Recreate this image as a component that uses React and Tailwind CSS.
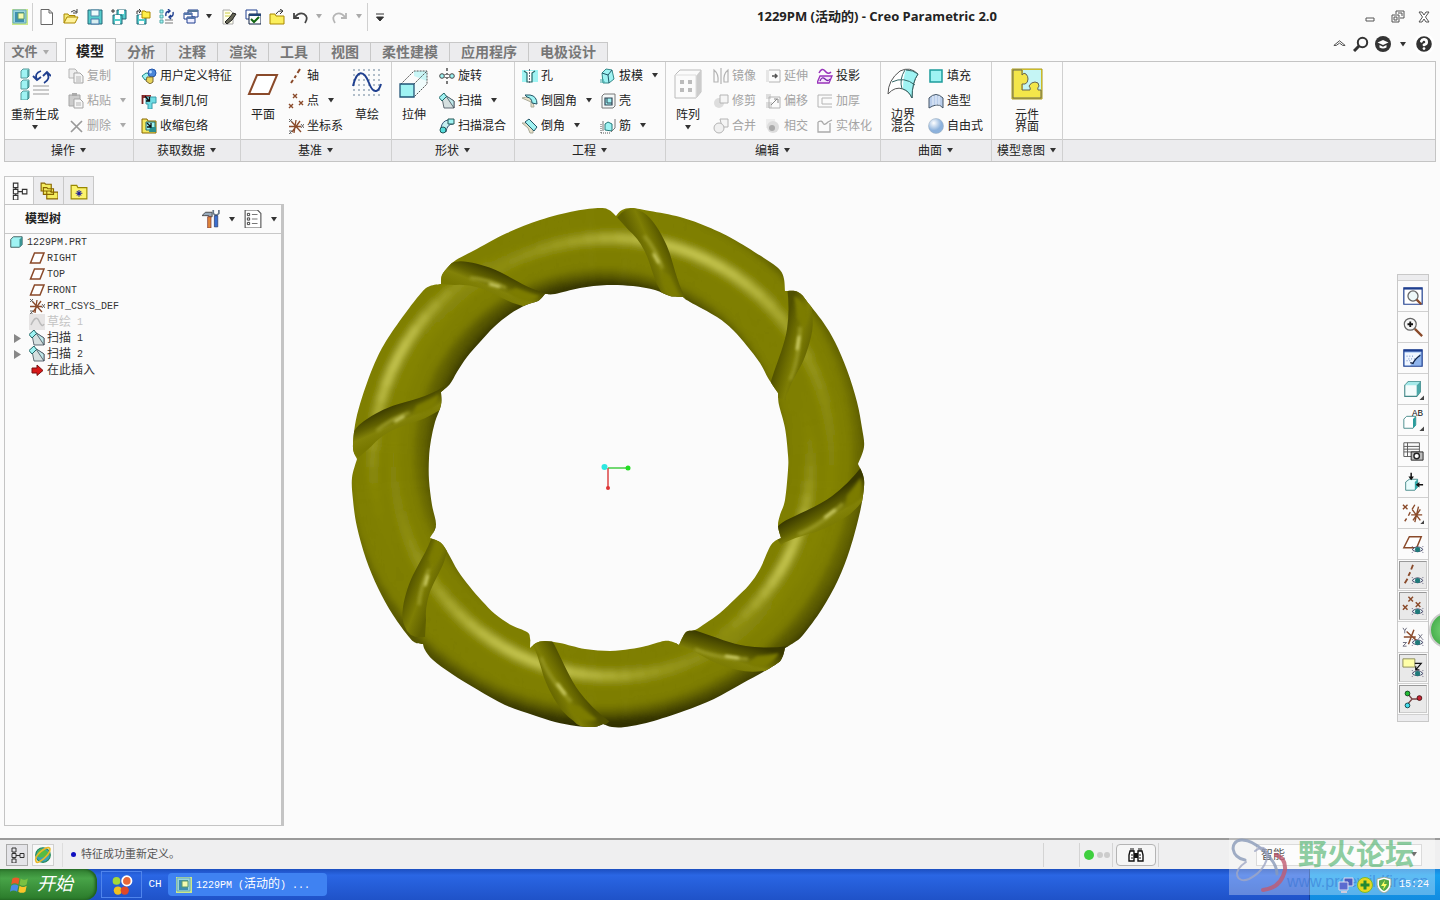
import { HelpCircle } from 'lucide-react';

const C = '#9ff3f3';
const D = '#3f4a55';
const B = '#8a4a2a';
const G = '#b4b4b4';
const N = '#1f3f8f';

const eye = (
  <g>
    <path d="M11 18q6-6 12 0q-6 5-12 0z" fill="#e8f4f4" stroke="#446" strokeWidth="1" />
    <circle cx="17" cy="18" r="2.8" fill="#1f7a7a" />
    <path d="M12 15.500l-1-1M22 15.500l1-1M12 20.500l-1 1M22 20.500l1 1" stroke="#446" />
  </g>
);

// 16x16 glyphs unless a size is listed in SIZES
const SIZES = { regenBig: 32, plane: 32, sketch: 32, extrude: 32, pattern: 32, boundary: 32, component: 32, refit: 24, zoomIn: 24, repaint: 24, display: 24, saved: 24, camera: 24, viewMgr: 24, datum: 24, vPlane: 24, vAxis: 24, vPoint: 24, vCsys: 24, vNote: 24, vSpin: 24 };

const GLYPHS = {
  app: <><path d="M0 0h16v16H0z" fill="#cbe88a" /><path d="M1 1h13v13H1z" fill="#9ad4dc" stroke="#6ab" /><path d="M3 3h9v10H3z" fill="#3f8fb0" /><path d="M6 4h6v6H6z" fill="#f4fbb0" stroke="#5a9a70" /></>,
  file: <path d="M2 .5h8l3.500 3.500v11.500H2zM10 .5v3.500h3.500" fill="#fff" stroke="#666" />,
  open: <><path d="M1 14V5h4l1 1.500h6V9" fill="#f5ea7a" stroke="#a80" /><path d="M1 14l3-6h11l-3 6z" fill="#fff29a" stroke="#a80" /><path d="M8 3q3-3 6 0M14 0v4h-4" fill="none" stroke="#444" /></>,
  save: <><path d="M1 1h14v14H1z" fill="#5cc" stroke="#267" /><path d="M4 1h8v6H4z" fill="#eefcfc" stroke="#58a" /><path d="M4 10h8v5H4z" fill="#d8eef0" stroke="#47a" /></>,
  saveAs: <><path d="M6 1h9v9H6z" fill="#5cc" stroke="#267" /><path d="M8 1h5v4H8z" fill="#fff" /><path d="M2 6h9v9H2z" fill="#5cc" stroke="#267" /><path d="M4 6h5v4H4zM4 12h5v3H4z" fill="#fff" /><path d="M0 2h4M2 0v4" stroke="#333" /></>,
  backup: <><path d="M2 6h9v9H2z" fill="#5cc" stroke="#267" /><path d="M4 6h5v4H4zM4 12h5v3H4z" fill="#fff" /><path d="M7 2h3l1 1h4v6H7z" fill="#fff04a" stroke="#a80" /><path d="M2 5V2h4M4 0l2 2-2 2" fill="none" stroke="#333" /></>,
  regen: <><path d="M1 1h3v3H1zM1 6h3v3H1zM1 11h3v3H1z" fill={C} stroke="#5aa" /><path d="M6 11h8M6 14h8" stroke="#777" /><path d="M7 7q-1-5 4-5M9 0l2 2-2 2M14 3q1 5-4 5M12 10l-2-2 2-2" fill="none" stroke={N} strokeWidth="1.4" /></>,
  windows: <><path d="M5 1h10v7H5z" fill="#fff" stroke={N} /><path d="M5 1h10v2H5z" fill="#579" /><path d="M1 4h8v6H1z" fill="#fff" stroke={N} /><path d="M1 4h8v2H1z" fill="#57a" /><path d="M4 8h8v6H4z" fill="#eef" stroke={N} /><path d="M4 8h8v2H4z" fill="#57a" /></>,
  erase: <><path d="M2 1h7l3 3v11H2z" fill="#ffe" stroke="#aaa" /><path d="M4 4h5M4 7h5" stroke="#cc4" /><path d="M15 5l-4 6-5 4-2-2 5-5 3-4z" fill="#665" stroke="#222" /></>,
  checkWin: <><path d="M1 1h11v9H1z" fill="#fff" stroke={N} /><path d="M4 5h12v10H4z" fill="#fff" stroke="#124" /><path d="M4 5h12v2H4z" fill="#247" /><path d="M6 10l3 3 5-5" fill="none" stroke="#161" strokeWidth="2" /></>,
  closeFolder: <><path d="M1 5h5l1 2h8v8H1z" fill="#fbef5c" stroke="#a80" /><path d="M7 5q2-4 6-3M11 0l3 2-3 3" fill="none" stroke="#333" /></>,
  undo: <path d="M1 4v5h5M2 8q4-5 9-3q5 3 1 9" fill="none" stroke="#444" strokeWidth="1.800" />,
  redo: <path d="M15 4v5h-5M14 8q-4-5-9-3q-5 3-1 9" fill="none" stroke="#b5b5b5" strokeWidth="1.800" />,
  more: <path d="M4 5h8M4.500 8h7L8 12z" fill="#333" stroke="#333" />,
  copy: <><path d="M1 1h6l2 2v7H1z" fill="#eee" stroke={G} /><path d="M6 5h6l3 3v7H6z" fill="#f4f4f4" stroke="#a5a5a5" /><path d="M8 9h5M8 11h5M8 13h5" stroke={G} /></>,
  paste: <><path d="M1 2h11v11H1z" fill="#ccc" stroke="#a5a5a5" /><path d="M4 0h5v3H4z" fill="#aaa" /><path d="M6 6h6l3 3v6H6z" fill="#f6f6f6" stroke="#a5a5a5" /><path d="M8 10h5M8 12h5" stroke={G} /></>,
  del: <path d="M3 3l11 11M14 3L3 14" stroke="#999" strokeWidth="1.700" />,
  udf: <><path d="M1 8l4-3 5 1-1 4-5 2z" fill={C} stroke="#288" /><circle cx="11" cy="5" r="4" fill="#4a86d8" stroke="#25a" /><path d="M6 9h6v5l-3 2-4-3z" fill="#e8d45a" stroke="#763" /><circle cx="9.500" cy="4" r="1.400" fill="#bdf" /></>,
  copyGeo: <><path d="M1 2h9v3H1z" fill="#933" /><path d="M1.500 2v9" stroke="#722" strokeWidth="1.800" /><path d="M5 4h10v6h-4v6H7v-5H5z" fill="#6fdce4" stroke="#3a9aa8" /><path d="M4 3l4 5M8.500 4v4H5" stroke="#111" strokeWidth="1.300" fill="none" /></>,
  shrink: <><path d="M1 1h5l1 2h8v12H1z" fill="#f3e860" stroke="#860" /><path d="M5 4h9v8H5z" fill={C} stroke="#266" /><path d="M9 9h6v5H8z" fill="#2a8f8f" /><path d="M6 5l4 4M10 5v4H6" stroke="#111" strokeWidth="1.300" fill="none" /></>,
  axis: <path d="M12 1L9.500 5M8 7.500L6.500 10M5 12l-2 3" stroke={B} strokeWidth="2" />,
  point: <path d="M5 1l4 4M9 1L5 5M11 8l4 4M15 8l-4 4M1 11l4 4M5 11l-4 4" stroke={B} strokeWidth="1.400" />,
  csys: <><path d="M1 8.500h12M8 2L6 15M3 3l10 11M12 3L4 14" stroke={B} strokeWidth="1.300" /><path d="M1 1l3 3M4 1L1 4M13 6l3 4M16 6l-3 4M1 13h3l-3 3h3" stroke="#666" fill="none" /></>,
  revolve: <><path d="M8 0v3M8 5v2M8 9v2M8 13v3" stroke="#333" strokeWidth="1.300" /><circle cx="3" cy="8" r="2.300" fill={C} stroke="#444" /><circle cx="13" cy="8" r="2.300" fill={C} stroke="#444" /><path d="M5 7q3-2 6 0M5 9q3 2 6 0" fill="none" stroke="#777" /></>,
  sweep: <><path d="M3 5l2 10h10V8L7 3z" fill="#d5dfdf" stroke={D} strokeWidth=".8" /><path d="M7 3l8 12V8L9 4z" fill="#bfe8ea" stroke={D} strokeWidth=".8" /><path d="M0 4.500L5 0l2.500 3.500L3 8z" fill={C} stroke="#266" /></>,
  blend: <><path d="M2 10q1-7 7-8l5 4q-6 0-7 8z" fill="#c5eef0" stroke="#357" /><path d="M9 1h6v5H9z" fill={C} stroke="#255" /><circle cx="4" cy="12" r="3" fill="#5dd" stroke="#255" /></>,
  hole: <><path d="M0 2h16v12H0z" fill={C} /><path d="M2 3l3 2v9h5V5l3-2" fill="#fff" stroke="#266" strokeWidth="1.200" /><path d="M7.500 1v14" stroke="#667" strokeDasharray="2 1" /></>,
  round: <><path d="M0 5q7-2 9 1q3 3 3 8H9V9z" fill="#e6e0c8" stroke="#aa9" /><path d="M3 2h5q7 1 7 9l-5-1q0-5-5-6z" fill={C} stroke="#256" /></>,
  chamfer: <><path d="M0 5h6l5 5v5H8l-2-5z" fill="#e6e0c8" stroke="#aa9" /><path d="M3 4l4-3 8 8-3 4z" fill={C} stroke="#256" /></>,
  draft: <><path d="M2 5l4-4 6 1 2 9-5 4H3z" fill={C} stroke="#388" /><path d="M2 5l6 2 1 8M8 7l4-5" fill="none" stroke="#256" /><path d="M0 12h4M0 14h5" stroke="#4aa" /></>,
  shell: <><path d="M2 3l2-2h11v12l-2 2H2z" fill="#f4f8f8" stroke="#777" /><path d="M5 5h7v7H5z" fill={C} stroke="#345" strokeWidth="1.200" /><path d="M7 5v5h5" fill="none" stroke="#345" /></>,
  rib: <><path d="M1 15V6M1 15h9" stroke="#555" strokeDasharray="1 1" /><path d="M5 12V6l3-2 4 2v7z" fill={C} stroke="#277" /><path d="M3 3v10M15 1v9l-4 4" fill="none" stroke="#777" /></>,
  mirror: <path d="M1 2q5 4 4 12H1zM15 2q-5 4-4 12h4zM8 0v16" fill="none" stroke={G} strokeWidth="1.200" />,
  trim: <><circle cx="6" cy="10" r="5" fill="#ddd" /><path d="M7 2h8v8H7z" fill="#f5f5f5" stroke={G} /></>,
  merge: <><path d="M7 1h8v8H9z" fill="#f5f5f5" stroke={G} /><circle cx="6" cy="10" r="5" fill="#f0f0f0" stroke={G} /></>,
  extend: <><path d="M1 2h3v12H1z" fill="#e6e6e6" /><path d="M4 2h11v12H4" fill="none" stroke={G} /><path d="M7 8h4M10 6l2 2-2 2" fill="none" stroke="#555" strokeWidth="1.500" /></>,
  offset: <><path d="M1 1h5v5H1zM1 9h6v6H1z" fill="#ddd" /><path d="M4 4h11v11H4z" fill="none" stroke={G} /><path d="M6 12l6-6M9 6h4v4" fill="none" stroke="#888" /></>,
  intersect: <><path d="M1 1h9v9H1z" fill="#eee" /><circle cx="8" cy="9" r="6" fill="#ddd" /><circle cx="7" cy="10" r="3" fill="#aaa" /></>,
  project: <><path d="M2 5q3-6 6-2t6 1" fill="none" stroke="#93b" strokeWidth="1.500" /><path d="M3 8h12l-3 7H0z" fill="#f6e6fb" stroke="#93b" strokeWidth="1.300" /><path d="M3 13q2-5 5-2t5 0" fill="none" stroke="#72a" strokeWidth="1.300" /></>,
  thicken: <path d="M15 2H1v12h14M15 5H5v6h10" fill="none" stroke={G} strokeWidth="1" />,
  solidify: <path d="M1 4v10h12V5M1 4q4-2 5 1t5-1l4-2" fill="none" stroke="#aaa" strokeWidth="1.300" />,
  fill: <path d="M2 2h12v12H2z" fill={C} stroke="#1c9c9c" strokeWidth="1.500" />,
  style: <><path d="M1 5q7-7 14 0v10q-3-4-7-3t-7 3z" fill="#b9cdea" stroke="#456" /><path d="M5 3v9M8 2v10M11 3v9" stroke="#e8f0fa" /></>,
  free: <><defs><radialGradient id="ball" cx=".35" cy=".3"><stop offset="0" stopColor="#fff" /><stop offset="1" stopColor="#8db2dc" /></radialGradient></defs><circle cx="8" cy="8" r="7.500" fill="url(#ball)" stroke="#9ab" strokeWidth=".5" /></>,
  regenBig: <><path d="M2 3l2-2h6v7l-2 2H2zM2 14l2-2h6v7l-2 2H2zM2 25l2-2h6v7l-2 2H2z" fill={C} stroke="#599" /><path d="M9 2v7M9 13v7M9 24v7" stroke="#277" /><path d="M14 18h16M14 22h16M14 26h16" stroke="#999" /><path d="M18 12q-3-7 4-9M14 8l4 4 4-3M28 5q4 6-3 10M24 8l4-4 4 4" fill="none" stroke={N} strokeWidth="1.800" /></>,
  plane: <path d="M10 7h20l-8 19H2z" fill="#fff" stroke={B} strokeWidth="2" />,
  sketch: <><path d="M2 2h28M2 7h28M2 12h28M2 17h28M2 22h28M2 27h28" stroke="#9ab" strokeDasharray="2 3" strokeWidth="1.500" /><path d="M2 18C6 1 13 2 18 15S28 23 30 16" fill="none" stroke={N} strokeWidth="2" /></>,
  extrude: <><path d="M16 16L29 3v13L16 29z" fill="#f0fbfb" /><path d="M16 3h13v10L16 8z" fill="#c9f6f6" /><path d="M3 16L16 3h13v13L16 29M16 16L29 3" fill="none" stroke="#555" strokeDasharray="2 1" /><path d="M2 16h14v13H2z" fill={C} stroke="#257" strokeWidth="1.300" /></>,
  pattern: <><path d="M3 7l5-5h21v22l-5 6H3z" fill="#fbfbfb" stroke="#bbb" /><path d="M24 8l5-6v22l-5 6z" fill="#ccc" /><path d="M3 7h21v23" fill="none" stroke="#ddd" /><path d="M8 12h4v4H8zM16 12h4v4h-4zM8 20h4v4H8zM16 20h4v4h-4z" fill="#bbb" /></>,
  boundary: <><path d="M1 26q0-14 12-23q10-5 18 3q-6 8-6 24q-3-7-9-9q-8-3-15 5z" fill="#fff" stroke="#555" /><path d="M19 2q7 0 12 4q-6 8-6 24q-3-7-9-9 0-12 3-19z" fill={C} /><path d="M18 2q-6 9-3 19M5 14q12-6 23 3M19 2q7 0 12 4q-6 8-6 24q-3-7-9-9" fill="none" stroke="#366" /></>,
  component: <><path d="M1 1h30v30H1z" fill="#f0dc30" stroke="#a89a20" /><path d="M12 2h18v20H12z" fill="#c5f5f5" /><path d="M2 2h9v5q2-3 4-1t2 5q0 4-3 5h-3v6h8q1-2-1-4q2-4 6-4t4 4q-2 2-1 4h3v8H2z" fill="#f3e64a" stroke="#665" /></>,
  tree: <path d="M3 1h4v4H3zM3 6.500h4v4H3zM3 12h4v4H3zM11 6.500h4v4h-4zM5 5v1.500M5 10.500V12M7 8.500h4" fill="none" stroke="#333" />,
  folders: <path d="M1 1h3l1 1h5v6H1zM3 5h3l1 1h5v5H3zM6 8h3l1 1h6v6H6z" fill="#f4ec5e" stroke="#860" />,
  favs: <><path d="M1 3h5l1 2h8v10H1z" fill="#fbf36c" stroke="#980" /><path d="M8 7v6M5 10h6M6 8l4 4M10 8l-4 4" stroke="#229" strokeWidth=".9" /></>,
  tools: <><path d="M0 5l3-3h6v4H6V5H2z" fill="#9ab" stroke="#444" strokeWidth=".8" /><path d="M5 6h3v10H5z" fill="#e0853a" stroke="#733" strokeWidth=".6" /><path d="M10 0v3l2.500 2L15 3V0" fill="none" stroke="#678" strokeWidth="1.500" /><path d="M11 5h3v10h-3z" fill="#3a6fd0" stroke="#236" strokeWidth=".6" /></>,
  list: <><path d="M1 0h11l3 3v13H1z" fill="#fff" stroke="#555" /><path d="M3 3h2v2H3zM3 7h2v2H3zM3 11h2v2H3z" fill="none" stroke="#333" strokeWidth=".8" /><path d="M7 4h5M7 8h5M7 12h5" stroke="#777" /></>,
  part: <><path d="M2 5l3-3h10v9l-3 3H2z" fill={C} stroke="#355" /><path d="M12 5l3-3v9l-3 3z" fill="#3a9494" /></>,
  smallPlane: <path d="M5.500 3H15l-4 10H1.500z" fill="#fff" stroke={B} strokeWidth="1.500" />,
  greySketch: <><path d="M0 0h16v16H0z" fill="#e6e4e4" /><path d="M2 11q5-11 8-4t5 3" fill="none" stroke="#bbb" strokeWidth="1.500" /></>,
  insert: <path d="M3 6h5V3l6 5.500-6 5V11H3z" fill="#d81818" stroke="#711" />,
  globe: <><circle cx="8" cy="8" r="6.500" fill="#3aa0b8" stroke="#285" /><path d="M4 4q4-3 8 1t-4 5-4-6z" fill="#5b4" /><path d="M2 14Q0 10 6 5T14 2Q15 6 9 11T2 14z" fill="none" stroke="#e8b828" strokeWidth="1.500" /></>,
  refit: <><path d="M2 3h20v18H2z" fill="#fff" stroke={N} strokeWidth="1.300" /><path d="M2 3h20v2H2z" fill={N} /><circle cx="12" cy="12" r="5.500" fill="#eef8f8" stroke="#666" strokeWidth="1.400" /><path d="M16 16l5 5" stroke={B} strokeWidth="2.500" /></>,
  zoomIn: <><circle cx="9" cy="9" r="6.500" fill="#f6f6f6" stroke="#666" strokeWidth="1.300" /><path d="M6 9h6M9 6v6" stroke="#111" strokeWidth="2" /><path d="M14 14l8 8" stroke={B} strokeWidth="2.500" /></>,
  repaint: <><path d="M2 3h20v18H2z" fill="#8fb4ec" stroke={N} strokeWidth="1.300" /><path d="M2 3h20v2H2z" fill={N} /><path d="M3 6h18L9 20H3z" fill="#f0f6ff" /><path d="M5 10h9M7 13h7M5 15h5" stroke="#57b" strokeDasharray="1 2" /><path d="M20 9q-6 4-8 9l-3-1" fill="none" stroke="#124" strokeWidth="1.500" /></>,
  display: <><path d="M3 8l4-4h13v11l-4 5H3z" fill="#f4fcfc" stroke="#488" strokeWidth="1.200" /><path d="M3 8l4-4h13l-4 4z" fill="#a5eaea" /><path d="M16 8l4-4v11l-4 5z" fill="#4aa8a8" /><path d="M24 19v5h-5z" fill="#444" /></>,
  saved: <><path d="M2 11l3-3h10v9l-3 4H2z" fill="#fff" stroke="#488" /><path d="M12 11l3-3v10l-3 3z" fill="#2a9c9c" /><text x="11" y="8" fontSize="10" fontFamily="Liberation Mono" fill="#111">AB</text><path d="M24 19v5h-5z" fill="#444" /></>,
  camera: <><path d="M2 3h17v15H2zM2 7h17M2 10h17M2 13h17M6 3v15" fill="none" stroke="#555" /><path d="M10 13h13v9H10z" fill="#bbb" stroke="#222" /><circle cx="16" cy="17.500" r="3" fill="#fff" stroke="#222" strokeWidth="1.500" /></>,
  viewMgr: <><path d="M4 12l4-3h9v8l-3 4H4z" fill="#e8fcfc" stroke="#488" /><path d="M14 12l3-3v9l-3 3z" fill="#3aa" /><path d="M10 2v5M23 15h-5" stroke="#111" strokeWidth="1.600" /><path d="M7 6h6l-3 4zM19 12v6l-4-3z" fill="#111" /></>,
  datum: <><path d="M1 3l5 5M6 3L1 8M14 3l-3 5M9 11l-2 4M5 18l-2 3M10 14h12M18 5l-4 17M11 8l9 12M20 8l-8 12" stroke={B} strokeWidth="1.500" /><path d="M24 20v4h-4z" fill="#444" /></>,
  vPlane: <><path d="M8 4h13l-5 12H2z" fill="#fff" stroke={B} strokeWidth="1.600" />{eye}</>,
  vAxis: <><path d="M12 1l-2 5M9 9l-2 4M6 16l-3 5" stroke={B} strokeWidth="2" />{eye}</>,
  vPoint: <><path d="M7 2l5 5M12 2L7 7M1 11l5 5M6 11l-5 5M15 8l5 5M20 8l-5 5" stroke={B} strokeWidth="1.600" />{eye}</>,
  vCsys: <><path d="M2 12h13M13 4L7 20M5 6l11 10" stroke={B} strokeWidth="1.600" /><path d="M1 2l2 3 2-3M3 5v3M18 9l4 5M22 9l-4 5M1 18h4l-4 4h4" fill="none" stroke="#667" />{eye}</>,
  vNote: <><path d="M1 2h13v9H1z" fill="#ffffa8" stroke="#885" /><path d="M14 7h7l-6 7M15 10v4h4" fill="none" stroke="#111" strokeWidth="1.300" />{eye}</>,
  vSpin: <><path d="M6 6l5 6h9M11 12l-6 7" stroke="#744" fill="none" strokeWidth="1.400" /><circle cx="6" cy="6" r="2.600" fill="#2b3" stroke="#142" /><circle cx="19" cy="11" r="2.600" fill="#c23" stroke="#411" /><circle cx="6" cy="19" r="2.600" fill="#4de" stroke="#144" /></>,
  binoc: <><path d="M2 4h4v10H1V8zM10 4h4l1 4v6h-5z" fill="#fff" stroke="#111" strokeWidth="1.400" /><path d="M6 6h4v5H6z" fill="#111" /><path d="M3 1v3M5 1v3M11 1v3M13 1v3" stroke="#111" /><path d="M4 7v6M12 7v6" stroke="#111" strokeDasharray="2 1" /></>,
  cap: <><circle cx="8" cy="8" r="8" fill="#333" /><path d="M2.500 6.500L8 4l5.500 2.500L8 9zM4.500 9v2.500q3.500 2 7 0V9L8 10.800z" fill="#fff" /></>,
  search: <><circle cx="9.500" cy="6.500" r="4.700" fill="none" stroke="#333" strokeWidth="2" /><path d="M6 10l-5 5" stroke="#333" strokeWidth="3" /></>,
  up: <path d="M2 9l6-5 6 5h-2.500L8 6.500 4.500 9z" fill="#fff" stroke="#444" strokeWidth="1" />,
  min: <path d="M4 9h8v3H4z" fill="#fff" stroke="#555" />,
  restore: <path d="M7 2h8v7h-4M7 2v3M3 6h7v7H3zM5 8h3v3H5zM9 4h4v3" fill="none" stroke="#555" />,
  close: <path d="M3 3h3l2 3 2-3h3l-3.500 5L13 13h-3l-2-3-2 3H3l3.500-5z" fill="#fff" stroke="#555" />,
  flag: <><path d="M2 3q3-2 6 0L7 8Q4 6 1 8z" fill="#ea5a2a" /><path d="M9 3q3 2 6 0l-1 5q-3 2-6 0z" fill="#7ac142" /><path d="M1 9q3-2 6 0l-1 5Q3 12 0 14z" fill="#4a8ae8" /><path d="M8 9q3 2 6 0l-1 5q-3 2-6 0z" fill="#fbc52a" /></>,
  media: <><circle cx="4" cy="5" r="2.800" fill="#a4d838" /><circle cx="5" cy="12" r="3" fill="#f0c020" /><circle cx="10" cy="12" r="3" fill="#e04828" /><circle cx="11.500" cy="5" r="3.400" fill="#e86838" stroke="#fff" strokeWidth="1.300" /></>,
  net: <><path d="M6 1h9v8H6z" fill="#4a5ac0" stroke="#dde" /><path d="M1 5h9v8H1z" fill="#5b6bd0" stroke="#dde" /><path d="M3 15h6" stroke="#ccd" strokeWidth="2" /></>,
  plus: <><circle cx="8" cy="8" r="7.500" fill="#e8d820" stroke="#7b3" /><path d="M8 3.500v9M3.500 8h9" stroke="#283" strokeWidth="3" /></>,
  shield: <><path d="M8 0l7 2v6q-1 6-7 8q-6-2-7-8V2z" fill="#fff" stroke="#9a9" /><path d="M8 2l5 1.500V8q-1 4-5 6q-4-2-5-6V3.500z" fill="#5a4" /><path d="M9 3L5 9h3l-1 4 4-6H8z" fill="#ff6" /></>,
};

function Icon({ name, size }) {
  const box = SIZES[name] || 16;
  const px = size || box;
  return (
    <svg width={px} height={px} viewBox={`0 0 ${box} ${box}`} className="shrink-0" aria-hidden="true">
      {GLYPHS[name]}
    </svg>
  );
}

function Caret({ dim }) {
  return (
    <svg width="8" height="5" viewBox="0 0 8 5" className="shrink-0" aria-hidden="true">
      <path d="M1 0h6L4 4.500z" fill={dim ? '#aaa' : '#333'} />
    </svg>
  );
}

const TABS = ['分析', '注释', '渲染', '工具', '视图', '柔性建模', '应用程序', '电极设计'];

// item: [icon, label, has menu, disabled]
const GROUPS = [
  { title: '操作', w: 'w-[129px]', cols: [
    { big: 'regenBig', label: ['重新生成'], menu: true, w: 'w-[60px]' },
    { items: [['copy', '复制', 0, 1], ['paste', '粘贴', 1, 1], ['del', '删除', 1, 1]] },
  ] },
  { title: '获取数据', w: 'w-[107px]', pad: 'pl-1', cols: [
    { items: [['udf', '用户定义特征'], ['copyGeo', '复制几何'], ['shrink', '收缩包络']] },
  ] },
  { title: '基准', w: 'w-[151px]', cols: [
    { big: 'plane', label: ['平面'], w: 'w-[44px]' },
    { items: [['axis', '轴'], ['point', '点', 1], ['csys', '坐标系']] },
    { big: 'sketch', label: ['草绘'], w: 'w-[48px]' },
  ] },
  { title: '形状', w: 'w-[123px]', cols: [
    { big: 'extrude', label: ['拉伸'], w: 'w-[44px]' },
    { items: [['revolve', '旋转'], ['sweep', '扫描', 1], ['blend', '扫描混合']] },
  ] },
  { title: '工程', w: 'w-[151px]', pad: 'pl-1 gap-1', cols: [
    { items: [['hole', '孔'], ['round', '倒圆角', 1], ['chamfer', '倒角', 1]] },
    { items: [['draft', '拔模', 1], ['shell', '壳'], ['rib', '筋', 1]] },
  ] },
  { title: '编辑', w: 'w-[215px]', cols: [
    { big: 'pattern', label: ['阵列'], menu: true, w: 'w-[44px]' },
    { items: [['mirror', '镜像', 0, 1], ['trim', '修剪', 0, 1], ['merge', '合并', 0, 1]], pad: 'pr-1.5' },
    { items: [['extend', '延伸', 0, 1], ['offset', '偏移', 0, 1], ['intersect', '相交', 0, 1]], pad: 'pr-1.5' },
    { items: [['project', '投影'], ['thicken', '加厚', 0, 1], ['solidify', '实体化', 0, 1]] },
  ] },
  { title: '曲面', w: 'w-[111px]', cols: [
    { big: 'boundary', label: ['边界', '混合'], w: 'w-[44px]' },
    { items: [['fill', '填充'], ['style', '造型'], ['free', '自由式']] },
  ] },
  { title: '模型意图', w: 'w-[71px]', cols: [
    { big: 'component', label: ['元件', '界面'], w: 'w-[70px]' },
  ] },
];

const TREE = [
  ['smallPlane', 'RIGHT'],
  ['smallPlane', 'TOP'],
  ['smallPlane', 'FRONT'],
  ['csys', 'PRT_CSYS_DEF'],
  ['greySketch', '', '草绘', '1'],
  ['sweep', '', '扫描', '1'],
  ['sweep', '', '扫描', '2'],
  ['insert', '', '在此插入', ''],
];

const VIEW_TOOLS = [
  ['refit', '重新调整'], ['zoomIn', '放大'], ['repaint', '重画'], ['display', '显示样式'],
  ['saved', '已保存方向'], ['camera', '视图管理器'], ['viewMgr', '透视图'], ['datum', '基准显示'],
  ['vPlane', '平面显示'], ['vAxis', '轴显示', 1], ['vPoint', '点显示', 1], ['vCsys', '坐标系显示'],
  ['vNote', '注释显示', 1], ['vSpin', '旋转中心', 1],
];

function TitleBar() {
  const tools = ['file', 'open', 'save', 'saveAs', 'backup', 'regen', 'windows'];
  const qa = 'flex h-6 w-6 items-center justify-center';
  return (
    <header className="flex h-[33px] items-center pl-2">
      <div className="flex items-center">
        <button className={qa} aria-label="Creo"><Icon name="app" /></button>
        <span className="mr-0.5 h-7 w-px bg-[#d0d0d0]" />
        {tools.map((t) => <button key={t} className={qa} aria-label={t}><Icon name={t} /></button>)}
        <span className="w-3.5 pl-0.5"><Caret /></span>
        <button className={qa} aria-label="erase"><Icon name="erase" /></button>
        <button className={qa} aria-label="checkWin"><Icon name="checkWin" /></button>
        <button className={qa} aria-label="close folder"><Icon name="closeFolder" /></button>
        <button className={qa} aria-label="undo"><Icon name="undo" /></button>
        <span className="w-3.5 pl-0.5"><Caret dim /></span>
        <button className={qa} aria-label="redo"><Icon name="redo" /></button>
        <span className="w-4 pl-1"><Caret dim /></span>
        <span className="h-7 w-px bg-[#d0d0d0]" />
        <button className={qa} aria-label="more"><Icon name="more" /></button>
      </div>
      <h1 className="flex-1 text-center font-['Open_Sans','Noto_Sans_CJK_SC',sans-serif] text-[13px] font-bold text-[#222]">1229PM (活动的) - Creo Parametric 2.0</h1>
      <div className="flex gap-[11px] pr-2">
        <button aria-label="最小化"><Icon name="min" /></button>
        <button aria-label="还原"><Icon name="restore" /></button>
        <button aria-label="关闭"><Icon name="close" /></button>
      </div>
    </header>
  );
}

function TabRow() {
  return (
    <nav className="flex h-7 items-end pl-1 text-[14px] font-bold text-[#777]">
      <button className="mr-2 flex h-[19px] w-[53px] items-center justify-center gap-1 border border-b-0 border-[#c8c8c8] bg-[#ececee]">
        <span className="text-[13px]">文件</span><Caret dim />
      </button>
      <button className="relative z-10 -mb-px h-6 border border-b-0 border-[#c4c4c4] bg-[#fbfbfb] pr-[11px] pl-2.5 leading-[22px] text-[#222]">模型</button>
      {TABS.map((t) => (
        <button key={t} className="h-[19px] border-t border-r border-[#c8c8c8] bg-[#ececee] px-[11px] leading-[18px]">{t}</button>
      ))}
      <div className="ml-auto flex h-[22px] items-center gap-1.5 self-start pr-[5px]">
        <button aria-label="折叠功能区"><Icon name="up" size={15} /></button>
        <button aria-label="搜索"><Icon name="search" /></button>
        <button className="flex items-center gap-2" aria-label="学习"><Icon name="cap" /><Caret /></button>
        <button aria-label="帮助"><HelpCircle size={22} fill="#333" color="#fff" strokeWidth={3} /></button>
      </div>
    </nav>
  );
}

function BigButton({ col }) {
  return (
    <button className={`flex shrink-0 flex-col items-center pt-1.5 ${col.w}`}>
      <Icon name={col.big} size={32} />
      <span className="mt-[9px] flex flex-col leading-3 whitespace-nowrap">
        {col.label.map((l) => <span key={l}>{l}</span>)}
      </span>
      {col.menu && <span className="mt-1"><Caret /></span>}
    </button>
  );
}

function SmallColumn({ col }) {
  return (
    <div className={`flex shrink-0 flex-col items-start pt-px ${col.pad || ''}`}>
      {col.items.map(([icon, label, menu, off]) => (
        <button key={label} className={`flex h-[25px] items-center whitespace-nowrap ${off ? 'text-[#a3a3a3]' : ''}`}>
          <span className="flex w-[22px] justify-center"><Icon name={icon} /></span>
          {label}
          {menu ? <span className="ml-2"><Caret dim={off} /></span> : null}
        </button>
      ))}
    </div>
  );
}

function Ribbon() {
  return (
    <section className="mx-1 flex border border-[#c4c4c4]">
      {GROUPS.map((g) => (
        <div key={g.title} className={`flex shrink-0 flex-col border-r border-[#d0d0d0] ${g.w}`}>
          <div className={`flex h-[77px] ${g.pad || ''}`}>
            {g.cols.map((c, i) => (c.big ? <BigButton key={i} col={c} /> : <SmallColumn key={i} col={c} />))}
          </div>
          <button className="flex h-[22px] items-center justify-center gap-1 border-t border-[#c8c8c8] bg-[#ececee] whitespace-nowrap">
            {g.title}<Caret />
          </button>
        </div>
      ))}
      <div className="flex flex-1 flex-col justify-end"><div className="h-[22px] border-t border-[#c8c8c8] bg-[#ececee]" /></div>
    </section>
  );
}

function ModelTree() {
  const tab = 'flex h-7 w-[30px] items-center justify-center border-t border-r border-[#c8c8c8]';
  return (
    <aside className="mt-3.5 mb-3 ml-1 flex w-[280px] shrink-0 flex-col">
      <div className="flex">
        <button className={`${tab} relative z-10 -mb-px border-l bg-[#fbfbfb]`} aria-label="模型树"><Icon name="tree" size={18} /></button>
        <button className={`${tab} bg-[#ececee]`} aria-label="文件夹"><Icon name="folders" size={18} /></button>
        <button className={`${tab} bg-[#ececee]`} aria-label="收藏夹"><Icon name="favs" size={18} /></button>
      </div>
      <div className="flex-1 border border-r-[3px] border-[#c4c4c4]">
        <div className="flex h-[29px] items-center border-b border-[#c8c8c8] pl-5">
          <h2 className="flex-1 font-bold">模型树</h2>
          <button className="mr-2 flex items-center gap-2" aria-label="设置"><Icon name="tools" size={18} /><Caret /></button>
          <button className="mr-[3px] flex items-center gap-2" aria-label="显示"><Icon name="list" size={18} /><Caret /></button>
        </div>
        <ul className="text-[#333]">
          <li className="flex h-4 items-center gap-1 pl-1">
            <Icon name="part" size={14} />
            <span className="font-['Liberation_Mono',monospace] text-[10px]">1229PM.PRT</span>
          </li>
          {TREE.map(([icon, latin, cjk, num], i) => (
            <li key={i} className={`flex h-4 items-center pl-2 ${icon === 'greySketch' ? 'text-[#c4c4c4]' : ''}`}>
              <span className="w-4 text-[#888]">
                {icon === 'sweep' && <svg width="9" height="9" viewBox="0 0 9 9"><path d="M1 0l7 4.500L1 9z" fill="#888" /></svg>}
              </span>
              <Icon name={icon} size={16} />
              <span className="pl-0.5 font-['Liberation_Mono',monospace] text-[10px]">{latin}</span>
              {cjk && <span className="leading-4">{cjk}</span>}
              {num && <span className="pl-1.5 font-['Liberation_Mono',monospace] text-[10px]">{num}</span>}
            </li>
          ))}
        </ul>
      </div>
    </aside>
  );
}

// Torus shading: two lights, evaluated on a polar grid
const CX = 608;
const CY = 467;
const LIGHTS = [{ x: -0.39, y: 0.2, k: 0.55 }, { x: 0.1, y: 0.24, k: 0.55 }];

function shade(theta, r) {
  const s = Math.max(-0.98, Math.min(0.98, (r - 219) / 41));
  const nx = Math.cos(theta) * s;
  const ny = Math.sin(theta) * s;
  const nz = Math.sqrt(1 - s * s);
  let diffuse = 0.4;
  let spec = 0;
  LIGHTS.forEach((l) => {
    const hz = Math.sqrt(1 - l.x * l.x - l.y * l.y);
    const h = nx * l.x + ny * l.y + nz * hz;
    const d = nx * 2 * hz * l.x + ny * 2 * hz * l.y + nz * (2 * hz * hz - 1);
    diffuse += Math.max(0, d) * 0.62;
    spec += l.k * Math.pow(Math.max(0, h), 80);
  });
  const base = Math.min(1, diffuse) * 126 + spec * 135;
  return `rgb(${Math.round(base)},${Math.round(base)},${Math.round(spec * 150)})`;
}

const CELLS = [];
for (let a = 0; a < 360; a += 4) {
  for (let r = 170; r < 270; r += 3) {
    const pt = (deg, rad) => {
      const t = (deg * Math.PI) / 180;
      return `${(CX + rad * Math.cos(t)).toFixed(1)} ${(CY - rad * Math.sin(t)).toFixed(1)}`;
    };
    CELLS.push({
      d: `M${pt(a, r)}L${pt(a + 4.4, r)}L${pt(a + 4.4, r + 3.6)}L${pt(a, r + 3.6)}z`,
      fill: shade(((a + 2) * Math.PI) / 180, r + 1.5),
    });
  }
}

// Contours run clockwise, one run per rope-to-rope segment
const OUTER = [
  [[441, 284], [442, 275], [448, 267], [456, 260], [473, 251], [507, 233], [540, 220], [575, 211], [600, 208], [609, 210], [616, 216]],
  [[616, 216], [622, 210], [632, 208], [650, 211], [680, 217], [708, 227], [733, 239], [767, 260], [780, 270], [784, 279], [785, 291]],
  [[785, 291], [795, 291], [802, 295], [809, 304], [823, 322], [835, 342], [847, 370], [857, 402], [862, 428], [864, 447], [858, 464]],
  [[858, 464], [863, 475], [864, 487], [860, 512], [850, 549], [838, 580], [822, 609], [803, 635], [795, 642], [785, 648]],
  [[785, 648], [782, 658], [775, 665], [743, 683], [714, 699], [684, 711], [650, 722], [625, 727], [612, 727], [603, 724]],
  [[603, 724], [594, 727], [576, 726], [555, 722], [533, 715], [505, 705], [478, 690], [452, 674], [433, 660], [425, 650], [423, 644]],
  [[423, 644], [416, 643], [409, 637], [393, 615], [378, 588], [366, 559], [357, 527], [353, 500], [352, 478], [357, 459]],
  [[357, 459], [353, 448], [355, 425], [360, 404], [368, 380], [377, 358], [388, 338], [407, 311], [422, 292], [430, 286], [441, 284]],
];
const INNER = [
  [[545, 294], [555, 294], [580, 288], [607, 285], [633, 286], [655, 290], [670, 296], [683, 297]],
  [[683, 297], [690, 302], [717, 317], [733, 330], [747, 346], [760, 363], [768, 378], [778, 393]],
  [[778, 393], [779, 405], [785, 428], [788, 455], [788, 470], [785, 500], [780, 515], [778, 526], [781, 538]],
  [[781, 538], [771, 545], [760, 569], [749, 585], [735, 599], [720, 613], [706, 623], [695, 630], [686, 632], [679, 645]],
  [[679, 645], [673, 642], [664, 641], [646, 646], [630, 649], [610, 651], [585, 649], [560, 643], [545, 641], [536, 643], [530, 648]],
  [[530, 648], [530, 638], [527, 632], [511, 625], [495, 614], [482, 601], [470, 587], [458, 571], [448, 553], [441, 543], [430, 538]],
  [[430, 538], [436, 525], [432, 505], [429, 480], [429, 458], [431, 440], [435, 422], [441, 405], [441, 392]],
  [[441, 392], [450, 384], [457, 372], [467, 357], [480, 342], [494, 327], [510, 314], [526, 305], [538, 301], [545, 294]],
];

// Catmull-Rom through each run, corners kept where runs meet
function contour(runs) {
  let d = `M${runs[0][0].join(' ')}`;
  runs.forEach((run) => {
    for (let i = 0; i < run.length - 1; i++) {
      const p0 = run[i - 1] || run[i];
      const p1 = run[i];
      const p2 = run[i + 1];
      const p3 = run[i + 2] || p2;
      const c1 = [p1[0] + (p2[0] - p0[0]) / 6, p1[1] + (p2[1] - p0[1]) / 6];
      const c2 = [p2[0] - (p3[0] - p1[0]) / 6, p2[1] - (p3[1] - p1[1]) / 6];
      d += `C${[...c1, ...c2, ...p2].map((v) => v.toFixed(1)).join(' ')}`;
    }
  });
  return `${d}Z`;
}
const SILHOUETTE = contour(OUTER) + contour(INNER);

const ROPE_A = 'M438 284Q436 268 448 264Q456 260 468 262C480 264 492 268 500 272C514 279 530 290 549 294Q540 306 530 308Q522 306 513 303C503 299 490 291 480 288Q467 284 455 285Z';
const ROPE_B = 'M675 645Q678 629 686 629Q692 629 700 632C715 637 732 644 746 646Q765 649 789 646Q789 656 780 664Q772 672 763 671Q750 673 738 670C725 667 712 662 704 657Q692 650 679 645Z';
const TURNS = [45, 0, -45, -90];
// turns where the overhanging edge is in shadow
const shadow = (rot) => rot === 0 || rot === -45;

function Ring() {
  return (
    <svg width="528" height="535" viewBox="344 200 528 535" className="mt-[38px] ml-[60px] shrink-0" role="img" aria-label="1229PM">
      <defs>
        <clipPath id="ring"><path clipRule="evenodd" d={SILHOUETTE} /></clipPath>
        <filter id="soft" x="-5%" y="-5%" width="110%" height="110%"><feGaussianBlur stdDeviation="2.500" /></filter>
        <filter id="glow" x="-50%" y="-200%" width="200%" height="500%"><feGaussianBlur stdDeviation="1.600" /></filter>
        <linearGradient id="ropeADark" gradientUnits="userSpaceOnUse" x1="500" y1="270" x2="489" y2="298">
          <stop offset="0" stopColor="#383800" /><stop offset=".4" stopColor="#606000" /><stop offset=".65" stopColor="#828208" /><stop offset="1" stopColor="#787800" />
        </linearGradient>
        <linearGradient id="ropeALight" gradientUnits="userSpaceOnUse" x1="500" y1="270" x2="489" y2="298">
          <stop offset="0" stopColor="#505000" /><stop offset=".3" stopColor="#6a6a00" /><stop offset=".55" stopColor="#7e7e04" /><stop offset="1" stopColor="#606000" />
        </linearGradient>
        <linearGradient id="ropeBDark" gradientUnits="userSpaceOnUse" x1="736" y1="641" x2="728" y2="671">
          <stop offset="0" stopColor="#383800" /><stop offset=".4" stopColor="#606000" /><stop offset=".65" stopColor="#828208" /><stop offset="1" stopColor="#787800" />
        </linearGradient>
        <linearGradient id="ropeBLight" gradientUnits="userSpaceOnUse" x1="736" y1="641" x2="728" y2="671">
          <stop offset="0" stopColor="#505000" /><stop offset=".3" stopColor="#6a6a00" /><stop offset=".55" stopColor="#7e7e04" /><stop offset="1" stopColor="#606000" />
        </linearGradient>
      </defs>
      <g clipPath="url(#ring)">
        <g filter="url(#soft)">{CELLS.map((c, i) => <path key={i} d={c.d} fill={c.fill} />)}</g>
        {TURNS.map((rot) => (
          <g key={rot} transform={`rotate(${rot} ${CX} ${CY})`}>
            <path d={ROPE_A} fill={shadow(rot) ? 'url(#ropeADark)' : 'url(#ropeALight)'} />
            <path d="M516 288Q532 294 540 296Q534 301 524 302Q515 299 508 292z" fill="#7c7c00" filter="url(#glow)" />
            <path d="M470 278Q488 279 506 288" fill="none" stroke="#9a9a28" strokeWidth="3" filter="url(#glow)" />
            <path d="M489 284l11 3" stroke="#e8e888" strokeWidth="2" filter="url(#glow)" />
          </g>
        ))}
        {TURNS.map((rot) => (
          <g key={rot} transform={`rotate(${rot} ${CX} ${CY})`}>
            <path d={ROPE_B} fill={shadow(rot) ? 'url(#ropeBDark)' : 'url(#ropeBLight)'} />
            <path d="M757 656Q770 655 779 653Q775 662 764 667Q752 668 748 663z" fill="#7c7c00" filter="url(#glow)" />
            <path d="M695 649Q714 658 748 659" fill="none" stroke="#9a9a28" strokeWidth="3" filter="url(#glow)" />
            <path d="M725 656l14 2" stroke="#e8e888" strokeWidth="2" filter="url(#glow)" />
          </g>
        ))}
      </g>
      <path d="M608 468h20" stroke="#4c4" strokeWidth="1.500" />
      <path d="M608 468v20" stroke="#d44" strokeWidth="1.500" />
      <circle cx="604.500" cy="467" r="3" fill="#2de8e0" />
      <circle cx="628" cy="468" r="2.500" fill="#2d2" />
      <circle cx="608" cy="488" r="2" fill="#d33" />
    </svg>
  );
}

function ViewToolbar() {
  return (
    <div className="mt-28 mr-[11px] flex w-8 shrink-0 flex-col self-start border border-[#c8c8c8] bg-[#ececee]">
      <span className="h-[5px]" />
      {VIEW_TOOLS.map(([icon, label, on]) => (
        <button key={icon} aria-label={label} className="flex h-[31px] items-center justify-center border-t border-[#d0d0d0] bg-[#fbfbfb]">
          <span className={`flex h-7 w-7 items-center justify-center ${on ? 'border border-r-[#ccc] border-b-[#ccc] border-t-[#999] border-l-[#999] bg-[#e9e9e9]' : ''}`}>
            <Icon name={icon} size={22} />
          </span>
        </button>
      ))}
      <span className="h-[7px] border-t border-[#d0d0d0]" />
    </div>
  );
}

function Watermark() {
  return (
    <div className="pointer-events-none absolute right-[5px] bottom-[5px] z-10 h-[57px] w-[206px] bg-white/30">
      <svg width="206" height="57" viewBox="0 0 206 57" aria-hidden="true">
        <g fill="none" strokeLinecap="round" strokeOpacity=".8">
          <path d="M16 22C2 20 0 3 12 2C26 1 48 22 48 36" stroke="#8a9ab8" strokeWidth="3" />
          <path d="M17 24C2 34 8 46 20 41C34 34 42 20 36 11Q32 8 26 13" stroke="#a0a8c4" strokeWidth="2" />
          <path d="M34 52Q52 50 56 32Q57 20 47 17" stroke="#c05a70" strokeWidth="4" />
        </g>
        <text x="69" y="27" fontSize="29" fontWeight="700" fontFamily="Noto Sans CJK SC" fill="#5cb878" fillOpacity=".7">野火论坛</text>
        <text x="58" y="49" fontSize="16" fontFamily="Liberation Sans" fill="#2f6fd0" fillOpacity=".5">www.proewildfire.cn</text>
      </svg>
    </div>
  );
}

function StatusBar() {
  return (
    <footer className="flex h-[31px] shrink-0 items-center border-t-2 border-[#9a9a9a] bg-[#efeff0] pl-1.5">
      <button className="flex h-[22px] w-[22px] items-center justify-center border border-[#aaa] bg-[#e4e4e8]" aria-label="导航器"><Icon name="tree" /></button>
      <button className="ml-1 flex h-[22px] w-[22px] items-center justify-center border border-[#d0d0d0] bg-[#f8f8f8]" aria-label="浏览器"><Icon name="globe" size={18} /></button>
      <span className="ml-2 h-6 w-px bg-[#ddd]" />
      <span className="ml-2 h-[5px] w-[5px] rounded-full bg-[#1010c0]" />
      <p className="ml-[5px] flex-1 text-[11px] text-[#555]">特征成功重新定义。</p>
      <span className="mr-[35px] h-6 w-px bg-[#d4d4d4]" />
      <span className="h-6 w-px bg-[#d4d4d4]" />
      <span className="ml-1 h-2.5 w-2.5 rounded-full bg-[#3fcf3f]" />
      <span className="ml-[3px] h-1.5 w-1.5 rounded-full bg-[#ccc]" />
      <span className="ml-px h-1.5 w-1.5 rounded-full bg-[#ccc]" />
      <span className="ml-0.5 h-6 w-px bg-[#d4d4d4]" />
      <button className="ml-[3px] flex h-[22px] w-10 items-center justify-center rounded-sm border border-[#b4b4b4] bg-[#f6f6f6]" aria-label="查找"><Icon name="binoc" /></button>
      <span className="ml-0.5 h-6 w-px bg-[#d4d4d4]" />
      <div className="relative mr-[18px] ml-[97px] flex w-[166px] items-center">
        <select aria-label="选择过滤器" className="h-[22px] w-full appearance-none border border-[#ccc] bg-[#fbfbfb] pl-1 leading-5 text-black">
          <option>智能</option>
        </select>
        <span className="pointer-events-none absolute right-1 flex"><Caret /></span>
      </div>
    </footer>
  );
}

function Taskbar() {
  const mono = "font-['Liberation_Mono','Noto_Sans_CJK_SC',monospace]";
  return (
    <div className="flex h-[31px] shrink-0 items-stretch bg-linear-to-b from-[#1c4fc0] via-[#2a66e4] via-20% to-[#1f52c8] text-white">
      <button className="flex w-[97px] items-center gap-2 rounded-r-xl bg-linear-to-b from-[#2f7d2f] via-[#48a448] via-30% to-[#2a7a2a] pl-2.5 text-[18px] italic shadow-[inset_-2px_0_3px_#1d5a1d]">
        <Icon name="flag" size={19} />开始
      </button>
      <button className="my-0.5 ml-1 flex w-[41px] items-center justify-center border border-[#4f84ec]" aria-label="媒体"><Icon name="media" size={22} /></button>
      <span className={`flex w-[26px] items-center justify-center text-[11px] ${mono}`}>CH</span>
      <button className="my-1 flex w-[159px] items-center gap-1 rounded-sm bg-[#3f82f2] pl-2 whitespace-pre">
        <Icon name="app" />
        <span className={`text-[10px] ${mono}`}>1229PM (<span className="text-[12px]">活动的</span>) ...</span>
      </button>
      <div className="ml-auto flex w-[131px] border-l border-[#0f3f9a] bg-linear-to-b from-[#1a86dc] via-[#18a0f0] via-20% to-[#128ce0] pl-7">
        <div className="relative z-20 flex items-center gap-[3px]">
          <Icon name="net" /><Icon name="plus" /><Icon name="shield" />
          <time className="pl-1 font-['Liberation_Mono',monospace] text-[10px]">15:24</time>
        </div>
      </div>
    </div>
  );
}

export default function App() {
  return (
    <div className="relative flex min-h-screen flex-col overflow-hidden bg-[#fbfbfb] font-['Liberation_Sans','Noto_Sans_CJK_SC',sans-serif] text-[12px] text-[#222]">
      <TitleBar />
      <TabRow />
      <Ribbon />
      <main className="relative flex flex-1">
        <ModelTree />
        <div className="flex min-w-0 flex-1 items-start"><Ring /></div>
        <ViewToolbar />
        <span className="absolute top-[450px] -right-[25px] h-9 w-9 rounded-full border-2 border-[#ccc] bg-radial from-[#7fdc7f] to-[#2f9f3a]" />
      </main>
      <StatusBar />
      <Taskbar />
      <Watermark />
    </div>
  );
}
